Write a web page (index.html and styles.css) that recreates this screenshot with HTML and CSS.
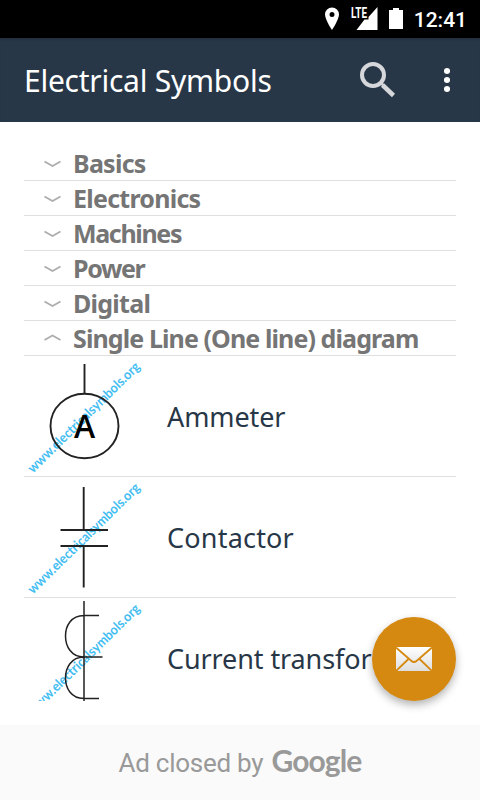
FILE: index.html
```html
<!DOCTYPE html>
<html lang="en">
<head>
    <meta charset="UTF-8">
    <meta name="viewport" content="width=device-width, initial-scale=1.0">
    <title>Electrical Symbols</title>
    <link rel="stylesheet" href="styles.css">
</head>
<body>
    <div class="app">
        <!-- Status Bar -->
        <div class="status-bar">
            <svg class="status-icons" width="78" height="38" viewBox="0 0 78 38">
                <path fill="#fff" fill-rule="evenodd" d="M7 7.500a7 7 0 0 1 7 7c0 5-7 15.500-7 15.500S0 19.500 0 14.500a7 7 0 0 1 7-7zM7 12a2.500 2.500 0 1 0 0 5 2.500 2.500 0 0 0 0-5z"/>
                <path fill="#fff" d="M52.500 7v23H31.500l8-10.500h4v-2.500z"/>
                <text class="lte" x="26" y="17.500" textLength="16" lengthAdjust="spacingAndGlyphs">LTE</text>
                <path fill="#fff" d="M64 10h4V8h6v2h4v19H64z"/>
            </svg>
            <span class="clock">12:41</span>
        </div>

        <!-- Toolbar -->
        <header class="toolbar">
            <h1>Electrical Symbols</h1>
            <svg class="search-icon" width="36" height="36" viewBox="0 0 36 36">
                <circle cx="13" cy="13" r="11" fill="none" stroke="#d5d7da" stroke-width="4"/>
                <path d="M22.500 23l11 10.500" stroke="#d5d7da" stroke-width="4.500"/>
                <path d="M20 20l3 3" stroke="#d5d7da" stroke-width="2.500"/>
            </svg>
            <svg class="menu-icon" width="6" height="26" viewBox="0 0 6 26">
                <circle cx="3" cy="4" r="3.100" fill="#fff"/>
                <circle cx="3" cy="13" r="3.100" fill="#fff"/>
                <circle cx="3" cy="22" r="3.100" fill="#fff"/>
            </svg>
        </header>

        <!-- Symbol List -->
        <main class="content">
            <div class="group">
                <svg class="chevron" width="18" height="8" viewBox="0 0 18 8"><path d="M.5 2.500l8 4.500 8-4.500"/></svg>
                <span>Basics</span>
            </div>
            <div class="group">
                <svg class="chevron" width="18" height="8" viewBox="0 0 18 8"><path d="M.5 2.500l8 4.500 8-4.500"/></svg>
                <span>Electronics</span>
            </div>
            <div class="group">
                <svg class="chevron" width="18" height="8" viewBox="0 0 18 8"><path d="M.5 2.500l8 4.500 8-4.500"/></svg>
                <span class="tight">Machines</span>
            </div>
            <div class="group">
                <svg class="chevron" width="18" height="8" viewBox="0 0 18 8"><path d="M.5 2.500l8 4.500 8-4.500"/></svg>
                <span class="tight">Power</span>
            </div>
            <div class="group">
                <svg class="chevron" width="18" height="8" viewBox="0 0 18 8"><path d="M.5 2.500l8 4.500 8-4.500"/></svg>
                <span>Digital</span>
            </div>
            <div class="group">
                <svg class="chevron" width="18" height="8" viewBox="0 0 18 8"><path d="M.5 6l8-4.500 8 4.500"/></svg>
                <span class="long">Single Line (One line) diagram</span>
            </div>

            <div class="item">
                <svg class="symbol" width="120" height="120" viewBox="0 0 120 120">
                    <text class="watermark" transform="translate(9 117.500) rotate(-44.500)" textLength="151" lengthAdjust="spacingAndGlyphs">www.electricalsymbols.org</text>
                    <path class="wire" d="M60.500 8v30"/>
                    <ellipse class="wire" cx="60.500" cy="70" rx="34" ry="32.300"/>
                    <text class="letter" x="60.500" y="82" text-anchor="middle">A</text>
                </svg>
                <span class="name">Ammeter</span>
            </div>
            <div class="item">
                <svg class="symbol" width="120" height="120" viewBox="0 0 120 120">
                    <text class="watermark" transform="translate(9 117.500) rotate(-44.500)" textLength="151" lengthAdjust="spacingAndGlyphs">www.electricalsymbols.org</text>
                    <path class="wire" d="M59.700 10v43M36.500 53h47.500M36.500 69h47.500M59.700 69v41.500"/>
                </svg>
                <span class="name wide">Contactor</span>
            </div>
            <div class="item">
                <svg class="symbol" width="120" height="120" viewBox="0 0 120 120">
                    <text class="watermark" transform="translate(9 117.500) rotate(-44.500)" textLength="151" lengthAdjust="spacingAndGlyphs">www.electricalsymbols.org</text>
                    <path class="wire thin" d="M60 3v110M75 17.500H60C47 17.500 41.500 28 41.500 38S47 59 60 59M78.500 59H60C47 59 41.500 70 41.500 80S47 100.500 60 100.500H75"/>
                </svg>
                <span class="name">Current transformer</span>
            </div>
        </main>

        <!-- Mail Button -->
        <button class="fab" aria-label="Send mail">
            <svg width="36" height="24" viewBox="0 0 36 24">
                <defs>
                    <linearGradient id="paper" x1="0" y1="0" x2="0" y2="1">
                        <stop offset="0" stop-color="#fff"/>
                        <stop offset="1" stop-color="#dedede"/>
                    </linearGradient>
                </defs>
                <path fill="url(#paper)" d="M0 0h36v24H0z"/>
                <path fill="none" stroke="#d68910" stroke-width="1.800" d="M0 .5l15.500 13.500q2.500 2 5 0L36 .5M0 24l12.500-12M36 24L23.500 12"/>
            </svg>
        </button>

        <!-- Ad Banner -->
        <footer class="ad">
            <span class="ad-text">Ad closed by</span>
            <span class="ad-logo">Google</span>
        </footer>
    </div>
</body>
</html>
```
FILE: styles.css
```css
body {
    margin: 0;
    background-color: #ffffff;
    font-family: "Noto Sans", "Open Sans", sans-serif;
}
.app {
    position: relative;
    display: flex;
    flex-direction: column;
    width: 480px;
    height: 800px;
    overflow: hidden;
}
/* Status Bar */
.status-bar {
    display: flex;
    align-items: center;
    justify-content: flex-end;
    height: 38px;
    padding-right: 13px;
    background-color: #000000;
}
.status-icons {
    margin-right: 11px;
}
.lte {
    font: bold 14.5px Roboto, sans-serif;
    fill: #ffffff;
}
.clock {
    color: #ffffff;
    font: 500 21px/38px Roboto, sans-serif;
    padding-top: 1px;
}
/* Toolbar */
.toolbar {
    display: flex;
    align-items: center;
    height: 84px;
    padding: 0 30px 0 24px;
    background-color: #283747;
    box-shadow: inset 0 3px 2px -1px rgba(0, 0, 0, 0.12);
}
.toolbar h1 {
    flex: 1;
    margin: 0;
    color: #ffffff;
    font-size: 30px;
    font-weight: 400;
    letter-spacing: -0.25px;
    white-space: nowrap;
}
.search-icon {
    margin-right: 48px;
}
/* Symbol List */
.content {
    flex: none;
    box-sizing: border-box;
    height: 579px;
    margin: 0 24px 24px;
    padding-top: 24px;
    overflow: hidden;
}
.group {
    display: flex;
    align-items: center;
    height: 34px;
    padding-left: 20px;
    border-bottom: 1px solid #dfdfdf;
    color: #757575;
    font-size: 25px;
    font-weight: 700;
    line-height: 34px;
    letter-spacing: -0.75px;
    white-space: nowrap;
}
.tight {
    letter-spacing: -1.35px;
}
.long {
    letter-spacing: -0.9px;
}
.chevron {
    margin-right: 11px;
    fill: none;
    stroke: #adadad;
    stroke-width: 1.8;
}
.item {
    display: flex;
    align-items: center;
    height: 120px;
    border-bottom: 1px solid #dfdfdf;
}
.symbol {
    flex: none;
    margin-right: 23px;
    overflow: visible;
}
.watermark {
    font: 700 13.5px Lato, sans-serif;
    fill: #42bdf2;
}
.wire {
    fill: none;
    stroke: #222222;
    stroke-width: 1.9;
}
.thin {
    stroke-width: 1.5;
}
.letter {
    font: 600 32px "Open Sans", sans-serif;
    fill: #000000;
}
.name {
    color: #283747;
    font-size: 27px;
    letter-spacing: -0.1px;
    white-space: nowrap;
}
.wide {
    letter-spacing: 0.2px;
}
/* Mail Button */
.fab {
    position: absolute;
    right: 24px;
    bottom: 99px;
    display: flex;
    align-items: center;
    justify-content: center;
    width: 84px;
    height: 84px;
    padding: 0;
    border: none;
    border-radius: 50%;
    background-color: #d68910;
    box-shadow: 0 4px 9px rgba(0, 0, 0, 0.3);
}
/* Ad Banner */
.ad {
    display: flex;
    align-items: baseline;
    justify-content: center;
    box-sizing: border-box;
    height: 75px;
    padding-top: 17px;
    background-color: #fafafa;
    color: #999999;
}
.ad-text {
    font: 26px/36px Roboto, sans-serif;
    letter-spacing: -0.25px;
    margin-right: 8px;
}
.ad-logo {
    font: 700 30px/36px Lato, sans-serif;
    letter-spacing: -0.85px;
}
```
